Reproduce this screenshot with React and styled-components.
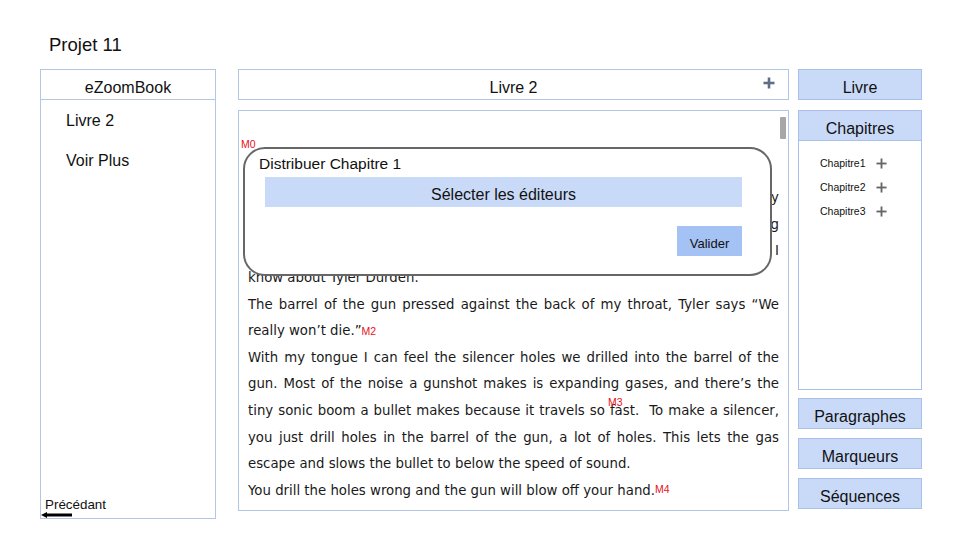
import React from "react";
import styled, { createGlobalStyle } from "styled-components";

const Global = createGlobalStyle`
  html, body { margin: 0; padding: 0; background: #fff; }
  body { font-family: "Liberation Sans", Arial, sans-serif; color: #111; }
  * { box-sizing: border-box; }
`;

const Page = styled.div`
  width: 960px;
  height: 540px;
  overflow: hidden;
`;

const Title = styled.div`
  padding: 34px 0 0 49px;
  height: 55px;
  margin-bottom: 14px;
  font-size: 18.5px;
  line-height: 21px;
`;

const Row = styled.div`
  display: flex;
  align-items: flex-start;
  padding-left: 40px;
`;

const LeftPanel = styled.div`
  width: 176px;
  height: 450px;
  border: 1px solid #b3c6e4;
  display: flex;
  flex-direction: column;
`;

const PanelHead = styled.div`
  height: 30px;
  padding-top: 6px;
  border-bottom: 1px solid ${(p) => (p.$fill ? "#a9c1e8" : "#b3c6e4")};
  background: ${(p) => (p.$fill ? "#c9daf8" : "transparent")};
  display: flex;
  align-items: center;
  justify-content: center;
  font-size: 16px;
`;

const NavList = styled.div`
  padding: 1px 0 0 25px;
`;

const NavItem = styled.div`
  font-size: 16px;
  line-height: 40px;
  height: 40px;
`;

const Footer = styled.div`
  margin-top: auto;
  display: flex;
  flex-direction: column;
`;

const BackLabel = styled.div`
  font-size: 13.4px;
  line-height: 15px;
  padding-left: 4px;
`;

const Center = styled.div`
  width: 551px;
  margin-left: 22px;
  display: flex;
  flex-direction: column;
  gap: 10px;
`;

const Header = styled.div`
  height: 31px;
  padding-top: 7px;
  border: 1px solid #b3c6e4;
  display: flex;
  align-items: center;
  justify-content: center;
  font-size: 16px;
  position: relative;
`;

const AddCorner = styled.span`
  position: absolute;
  right: 13px;
  top: 7px;
  display: flex;
`;

const Content = styled.div`
  height: 401px;
  border: 1px solid #b3c6e4;
  position: relative;
  overflow: hidden;
`;

const Text = styled.div`
  padding: 21px 9px 0 9px;
  font-family: "DejaVu Sans", Verdana, sans-serif;
  font-size: 13.3px;
  color: #1a1a1a;
`;

const Line = styled.div`
  height: 26.6px;
  line-height: 26.6px;
  white-space: nowrap;
  text-align: ${(p) => (p.$last ? "left" : "justify")};
  text-align-last: ${(p) => (p.$last ? "left" : "justify")};
`;

const Marker = styled.span`
  font-family: "Liberation Sans", Arial, sans-serif;
  font-size: 10.5px;
  color: #e8101a;
  position: relative;
  top: ${(p) => p.$up || 0}px;
  margin-left: ${(p) => p.$ml || 0}px;
`;

const FloatMarker = styled.span`
  display: inline-block;
  width: 0;
  overflow: visible;
  position: relative;
  top: -9px;
  left: 3px;
  font-family: "Liberation Sans", Arial, sans-serif;
  font-size: 10.5px;
  color: #e8101a;
`;

const Scrollbar = styled.div`
  position: absolute;
  right: 2px;
  top: 6px;
  width: 6px;
  height: 22px;
  background: #a7a7a7;
  border-radius: 1px;
`;

const Modal = styled.div`
  position: absolute;
  left: 4px;
  top: 36px;
  width: 529px;
  height: 129px;
  background: #fff;
  border: 2px solid #676767;
  border-radius: 22px;
  padding: 6px 28px 0 14px;
  display: flex;
  flex-direction: column;
`;

const ModalTitle = styled.div`
  font-size: 15.5px;
  line-height: 18px;
  height: 22px;
`;

const SelectBar = styled.div`
  margin-left: 6px;
  height: 30px;
  padding-top: 6px;
  background: #c9daf8;
  display: flex;
  align-items: center;
  justify-content: center;
  font-size: 16px;
`;

const Actions = styled.div`
  display: flex;
  justify-content: flex-end;
  margin-top: 19px;
`;

const Button = styled.div`
  width: 65px;
  height: 30px;
  padding-top: 4px;
  background: #a4c2f4;
  display: flex;
  align-items: center;
  justify-content: center;
  font-size: 13px;
`;

const Right = styled.div`
  width: 124px;
  margin-left: 9px;
  display: flex;
  flex-direction: column;
`;

const NavButton = styled.div`
  height: 31px;
  margin-top: ${(p) => p.$mt || 0}px;
  padding-top: ${(p) => p.$pt || 0}px;
  background: #c9daf8;
  border: 1px solid #a9c1e8;
  display: flex;
  align-items: center;
  justify-content: center;
  font-size: 16px;
`;

const ChapterPanel = styled.div`
  height: 280px;
  margin-top: 10px;
  border: 1px solid #a9c1e8;
  display: flex;
  flex-direction: column;
`;

const ChapterList = styled.div`
  padding: 10px 0 0 21px;
`;

const ChapterItem = styled.div`
  display: flex;
  align-items: center;
  gap: 10px;
  height: 24px;
  font-size: 10.5px;
`;

const Plus = ({ size = 12, color = "#777", w = 1.8 }) => (
  <svg width={size} height={size} viewBox="0 0 12 12">
    <line x1="6" y1="0.5" x2="6" y2="11.5" stroke={color} strokeWidth={w} />
    <line x1="0.5" y1="6" x2="11.5" y2="6" stroke={color} strokeWidth={w} />
  </svg>
);

const BackArrow = () => (
  <svg width="32" height="6" viewBox="0 0 32 6" style={{ display: "block" }}>
    <line x1="4" y1="3" x2="31" y2="3" stroke="#000" strokeWidth="3" />
    <polygon points="0,3 6,0 6,6" fill="#000" />
  </svg>
);

export default function App() {
  return (
    <Page>
      <Global />
      <Title>Projet 11</Title>
      <Row>
        <LeftPanel>
          <PanelHead>eZoomBook</PanelHead>
          <NavList>
            <NavItem>Livre 2</NavItem>
            <NavItem>Voir Plus</NavItem>
          </NavList>
          <Footer>
            <BackLabel>Précédant</BackLabel>
            <BackArrow />
          </Footer>
        </LeftPanel>

        <Center>
          <Header>
            Livre 2
            <AddCorner>
              <Plus size={12} color="#5f6e86" w={2.6} />
            </AddCorner>
          </Header>
          <Content>
            <Text>
              <Line $last>
                <Marker $ml={-7} $up={-1}>M0</Marker>
              </Line>
              <Line $last>{"\u00a0"}</Line>
              <Line>Tyler gets me a job as a waiter, after that Tyler’s pushing a gun in my</Line>
              <Line>mouth and saying, the first step to eternal life is to die. For a long</Line>
              <Line>time though, Tyler and I were best friends. People always ask, did I</Line>
              <Line $last>know about Tyler Durden.</Line>
              <Line>The barrel of the gun pressed against the back of my throat, Tyler says “We</Line>
              <Line $last>
                really won’t die.”<Marker>M2</Marker>
              </Line>
              <Line>With my tongue I can feel the silencer holes we drilled into the barrel of the</Line>
              <Line>gun. Most of the noise a gunshot makes is expanding gases, and there’s the</Line>
              <Line>
                tiny sonic boom a bullet makes because it travels so<FloatMarker>M3</FloatMarker> fast.{"\u00a0"} To make a silencer,
              </Line>
              <Line>you just drill holes in the barrel of the gun, a lot of holes. This lets the gas</Line>
              <Line $last>escape and slows the bullet to below the speed of sound.</Line>
              <Line $last>
                You drill the holes wrong and the gun will blow off your hand.<Marker $up={-2} $ml={0}>M4</Marker>
              </Line>
            </Text>
            <Scrollbar />
            <Modal>
              <ModalTitle>Distribuer Chapitre 1</ModalTitle>
              <SelectBar>Sélecter les éditeurs</SelectBar>
              <Actions>
                <Button>Valider</Button>
              </Actions>
            </Modal>
          </Content>
        </Center>

        <Right>
          <NavButton $pt={6}>Livre</NavButton>
          <ChapterPanel>
            <PanelHead $fill>Chapitres</PanelHead>
            <ChapterList>
              <ChapterItem>Chapitre1 <Plus size={11} color="#666" w={2} /></ChapterItem>
              <ChapterItem>Chapitre2 <Plus size={11} color="#666" w={2} /></ChapterItem>
              <ChapterItem>Chapitre3 <Plus size={11} color="#666" w={2} /></ChapterItem>
            </ChapterList>
          </ChapterPanel>
          <NavButton $mt={8} $pt={7}>Paragraphes</NavButton>
          <NavButton $mt={9} $pt={7}>Marqueurs</NavButton>
          <NavButton $mt={9} $pt={7}>Séquences</NavButton>
        </Right>
      </Row>
    </Page>
  );
}
